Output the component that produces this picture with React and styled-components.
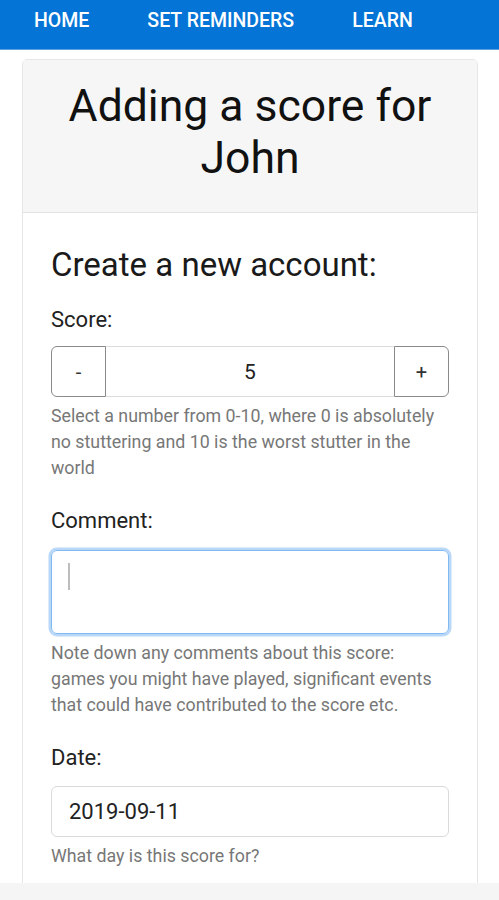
import React from "react";
import styled, { createGlobalStyle } from "styled-components";

const Global = createGlobalStyle`
  html, body { margin: 0; padding: 0; background: #fff; }
  body { font-family: Roboto, "Noto Sans", sans-serif; overflow: hidden; }
  * { box-sizing: border-box; }
`;

const Page = styled.div`
  height: 900px;
  overflow: hidden;
  position: relative;
`;

const Nav = styled.nav`
  height: 50px;
  background: #0474d6;
  border-bottom: 1px solid #5b9fe0;
  display: flex;
  align-items: flex-start;
  padding: 8px 0 0 5px;
`;

const NavLink = styled.a`
  color: #fff;
  font-size: 19.5px;
  font-weight: 500;
  text-transform: uppercase;
  padding: 0 29px;
  line-height: 26px;
  text-decoration: none;
`;

const Card = styled.section`
  margin: 9px 21px 0 22px;
  border: 1px solid #e6e6e6;
  border-radius: 5px;
  background: #fff;
`;

const CardHeader = styled.header`
  background: #f6f6f6;
  border-bottom: 1px solid #e2e2e2;
  padding: 20px 16px 28px;
  text-align: center;
`;

const Title = styled.h1`
  margin: 0;
  font-size: 44.5px;
  font-weight: 400;
  line-height: 52px;
  color: #111;
`;

const CardBody = styled.div`
  padding: 32px 28px 40px;
`;

const Heading = styled.h2`
  margin: 0 0 21px;
  font-size: 33px;
  font-weight: 400;
  line-height: 40px;
  color: #1a1a1a;
`;

const Field = styled.div`
  margin-bottom: 26px;
`;

const Label = styled.label`
  display: block;
  font-size: 22px;
  line-height: 28px;
  color: #222;
  margin-bottom: ${(p) => p.$gap || 12}px;
`;

const Group = styled.div`
  display: flex;
  height: 51px;
`;

const StepButton = styled.button`
  width: 55px;
  flex: none;
  background: #fff;
  border: 1px solid #8a8a8a;
  border-radius: ${(p) => (p.$side === "left" ? "6px 0 0 6px" : "0 6px 6px 0")};
  font-family: inherit;
  font-size: 20px;
  color: #333;
  padding: 0;
`;

const NumberInput = styled.div`
  flex: 1;
  border-top: 1px solid #dcdcdc;
  border-bottom: 1px solid #dcdcdc;
  display: flex;
  align-items: center;
  justify-content: center;
  font-size: 21px;
  color: #222;
`;

const Help = styled.p`
  margin: 6px 0 0;
  font-size: 17.8px;
  line-height: 26px;
  color: #777;
`;

const TextArea = styled.div`
  height: 84px;
  border: 1px solid #80b9f2;
  border-radius: 6px;
  box-shadow: 0 0 0 2.5px #b9d8f8;
  padding: 12px 16px;
`;

const Caret = styled.span`
  display: block;
  width: 2px;
  height: 27px;
  background: #bdbdbd;
`;

const DateInput = styled.div`
  height: 51px;
  border: 1px solid #dadada;
  border-radius: 6px;
  display: flex;
  align-items: center;
  padding: 0 17px;
  font-size: 22px;
  color: #222;
`;

const BottomBar = styled.div`
  position: absolute;
  left: 0;
  right: 0;
  bottom: 0;
  height: 17px;
  background: #f5f5f5;
`;

export default function App() {
  return (
    <Page>
      <Global />
      <Nav>
        <NavLink>Home</NavLink>
        <NavLink>Set Reminders</NavLink>
        <NavLink>Learn</NavLink>
      </Nav>
      <Card>
        <CardHeader>
          <Title>Adding a score for John</Title>
        </CardHeader>
        <CardBody>
          <Heading>Create a new account:</Heading>
          <Field>
            <Label>Score:</Label>
            <Group>
              <StepButton $side="left">-</StepButton>
              <NumberInput>5</NumberInput>
              <StepButton $side="right">+</StepButton>
            </Group>
            <Help>
              Select a number from 0-10, where 0 is absolutely no stuttering and 10 is the worst stutter in the world
            </Help>
          </Field>
          <Field>
            <Label $gap={15}>Comment:</Label>
            <TextArea>
              <Caret />
            </TextArea>
            <Help>
              Note down any comments about this score: games you might have played, significant events that could have contributed to the score etc.
            </Help>
          </Field>
          <Field>
            <Label $gap={14}>Date:</Label>
            <DateInput>2019-09-11</DateInput>
            <Help>What day is this score for?</Help>
          </Field>
        </CardBody>
      </Card>
      <BottomBar />
    </Page>
  );
}
